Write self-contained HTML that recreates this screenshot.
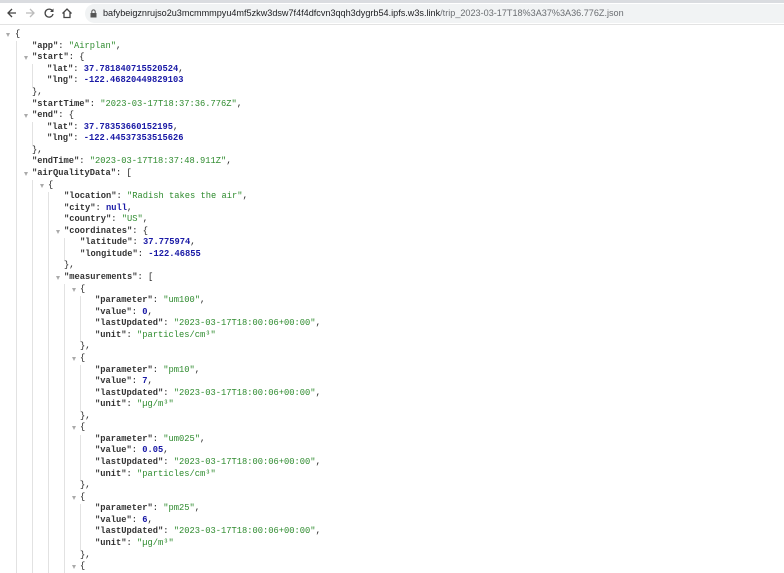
<!DOCTYPE html>
<html><head><meta charset="utf-8"><style>
html,body{margin:0;padding:0;background:#fff;width:784px;height:573px;overflow:hidden;position:relative}
.top{position:absolute;left:0;top:0;width:784px;height:3px;background:#dadce0}
.tb{position:absolute;left:0;top:3px;width:784px;height:21px;background:#fff;border-bottom:1px solid #e3e3e3}
.addr{position:absolute;left:85px;top:4px;width:699px;height:19px;background:#f1f3f4;border-radius:10px 0 0 10px}
.url{position:absolute;left:103px;top:7px;font:9.1px "Liberation Sans",sans-serif;color:#202124;white-space:nowrap;line-height:13px}
.url span{color:#6b6e72}
.ic{position:absolute;top:7px}
#code{position:absolute;left:0;top:29.2px;font:8.75px "Liberation Mono",monospace;color:#222}
#code div{height:11.565px;line-height:11.565px;position:relative;white-space:pre}
.s{color:#2e8b2e}.n{color:#1a1aa6;font-weight:bold}.k{font-weight:bold;color:#333}
.a{position:absolute;width:0;height:0;border-left:2.5px solid transparent;border-right:2.5px solid transparent;border-top:4px solid #aaa;top:4px}
.g{position:absolute;width:1px;background:#e2e2e2}
</style></head><body>
<div class="top"></div>
<div class="tb"></div>
<div class="addr"></div>
<svg class="ic" style="left:6px" width="12" height="12" viewBox="0 0 12 12"><path d="M10 6H2M6 2L2 6l4 4" stroke="#444" stroke-width="1.3" fill="none"/></svg>
<svg class="ic" style="left:24px" width="12" height="12" viewBox="0 0 12 12"><path d="M2 6h8M6 2l4 4-4 4" stroke="#bbb" stroke-width="1.3" fill="none"/></svg>
<svg class="ic" style="left:43px" width="12" height="12" viewBox="0 0 12 12"><path d="M9.5 4A4 4 0 1 0 10 7" stroke="#444" stroke-width="1.3" fill="none"/><path d="M10.5 1.5v3.5H7z" fill="#444"/></svg>
<svg class="ic" style="left:61px" width="12" height="12" viewBox="0 0 12 12"><path d="M1.5 6.5L6 2l4.5 4.5M3 5.5v5h6v-5" stroke="#444" stroke-width="1.3" fill="none"/></svg>
<svg class="ic" style="left:90px;top:9px" width="7" height="9" viewBox="0 0 7 9"><rect x="0.5" y="4" width="6" height="4.5" fill="#555"/><path d="M1.8 4V2.6a1.7 1.7 0 0 1 3.4 0V4" stroke="#555" fill="none"/></svg>
<div class="url">bafybeigznrujso2u3mcmmmpyu4mf5zkw3dsw7f4f4dfcvn3qqh3dygrb54.ipfs.w3s.link<span>/trip_2023-03-17T18%3A37%3A36.776Z.json</span></div>

<div class="g" style="left:16px;top:41px;height:532px"></div>
<div class="g" style="left:32px;top:64px;height:23px"></div>
<div class="g" style="left:32px;top:122px;height:23px"></div>
<div class="g" style="left:32px;top:180px;height:393px"></div>
<div class="g" style="left:48px;top:192px;height:381px"></div>
<div class="g" style="left:64px;top:238px;height:23px"></div>
<div class="g" style="left:64px;top:284px;height:289px"></div>
<div class="g" style="left:80px;top:296px;height:46px"></div>
<div class="g" style="left:80px;top:365px;height:46px"></div>
<div class="g" style="left:80px;top:435px;height:46px"></div>
<div class="g" style="left:80px;top:504px;height:46px"></div>

<div id="code"><div style="padding-left:15px"><i class="a" style="left:6px"></i>{</div><div style="padding-left:32px"><b class="k">"app"</b>: <span class="s">"Airplan"</span>,</div><div style="padding-left:32px"><i class="a" style="left:24px"></i><b class="k">"start"</b>: {</div><div style="padding-left:47px"><b class="k">"lat"</b>: <span class="n">37.781840715520524</span>,</div><div style="padding-left:47px"><b class="k">"lng"</b>: <span class="n">-122.46820449829103</span></div><div style="padding-left:32px">},</div><div style="padding-left:32px"><b class="k">"startTime"</b>: <span class="s">"2023-03-17T18:37:36.776Z"</span>,</div><div style="padding-left:32px"><i class="a" style="left:24px"></i><b class="k">"end"</b>: {</div><div style="padding-left:47px"><b class="k">"lat"</b>: <span class="n">37.78353660152195</span>,</div><div style="padding-left:47px"><b class="k">"lng"</b>: <span class="n">-122.44537353515626</span></div><div style="padding-left:32px">},</div><div style="padding-left:32px"><b class="k">"endTime"</b>: <span class="s">"2023-03-17T18:37:48.911Z"</span>,</div><div style="padding-left:32px"><i class="a" style="left:24px"></i><b class="k">"airQualityData"</b>: [</div><div style="padding-left:48px"><i class="a" style="left:40px"></i>{</div><div style="padding-left:64px"><b class="k">"location"</b>: <span class="s">"Radish takes the air"</span>,</div><div style="padding-left:64px"><b class="k">"city"</b>: <span class="n">null</span>,</div><div style="padding-left:64px"><b class="k">"country"</b>: <span class="s">"US"</span>,</div><div style="padding-left:64px"><i class="a" style="left:56px"></i><b class="k">"coordinates"</b>: {</div><div style="padding-left:80px"><b class="k">"latitude"</b>: <span class="n">37.775974</span>,</div><div style="padding-left:80px"><b class="k">"longitude"</b>: <span class="n">-122.46855</span></div><div style="padding-left:64px">},</div><div style="padding-left:64px"><i class="a" style="left:56px"></i><b class="k">"measurements"</b>: [</div><div style="padding-left:80px"><i class="a" style="left:72px"></i>{</div><div style="padding-left:95px"><b class="k">"parameter"</b>: <span class="s">"um100"</span>,</div><div style="padding-left:95px"><b class="k">"value"</b>: <span class="n">0</span>,</div><div style="padding-left:95px"><b class="k">"lastUpdated"</b>: <span class="s">"2023-03-17T18:00:06+00:00"</span>,</div><div style="padding-left:95px"><b class="k">"unit"</b>: <span class="s">"particles/cm³"</span></div><div style="padding-left:80px">},</div><div style="padding-left:80px"><i class="a" style="left:72px"></i>{</div><div style="padding-left:95px"><b class="k">"parameter"</b>: <span class="s">"pm10"</span>,</div><div style="padding-left:95px"><b class="k">"value"</b>: <span class="n">7</span>,</div><div style="padding-left:95px"><b class="k">"lastUpdated"</b>: <span class="s">"2023-03-17T18:00:06+00:00"</span>,</div><div style="padding-left:95px"><b class="k">"unit"</b>: <span class="s">"µg/m³"</span></div><div style="padding-left:80px">},</div><div style="padding-left:80px"><i class="a" style="left:72px"></i>{</div><div style="padding-left:95px"><b class="k">"parameter"</b>: <span class="s">"um025"</span>,</div><div style="padding-left:95px"><b class="k">"value"</b>: <span class="n">0.05</span>,</div><div style="padding-left:95px"><b class="k">"lastUpdated"</b>: <span class="s">"2023-03-17T18:00:06+00:00"</span>,</div><div style="padding-left:95px"><b class="k">"unit"</b>: <span class="s">"particles/cm³"</span></div><div style="padding-left:80px">},</div><div style="padding-left:80px"><i class="a" style="left:72px"></i>{</div><div style="padding-left:95px"><b class="k">"parameter"</b>: <span class="s">"pm25"</span>,</div><div style="padding-left:95px"><b class="k">"value"</b>: <span class="n">6</span>,</div><div style="padding-left:95px"><b class="k">"lastUpdated"</b>: <span class="s">"2023-03-17T18:00:06+00:00"</span>,</div><div style="padding-left:95px"><b class="k">"unit"</b>: <span class="s">"µg/m³"</span></div><div style="padding-left:80px">},</div><div style="padding-left:80px"><i class="a" style="left:72px"></i>{</div></div>
</body></html>
